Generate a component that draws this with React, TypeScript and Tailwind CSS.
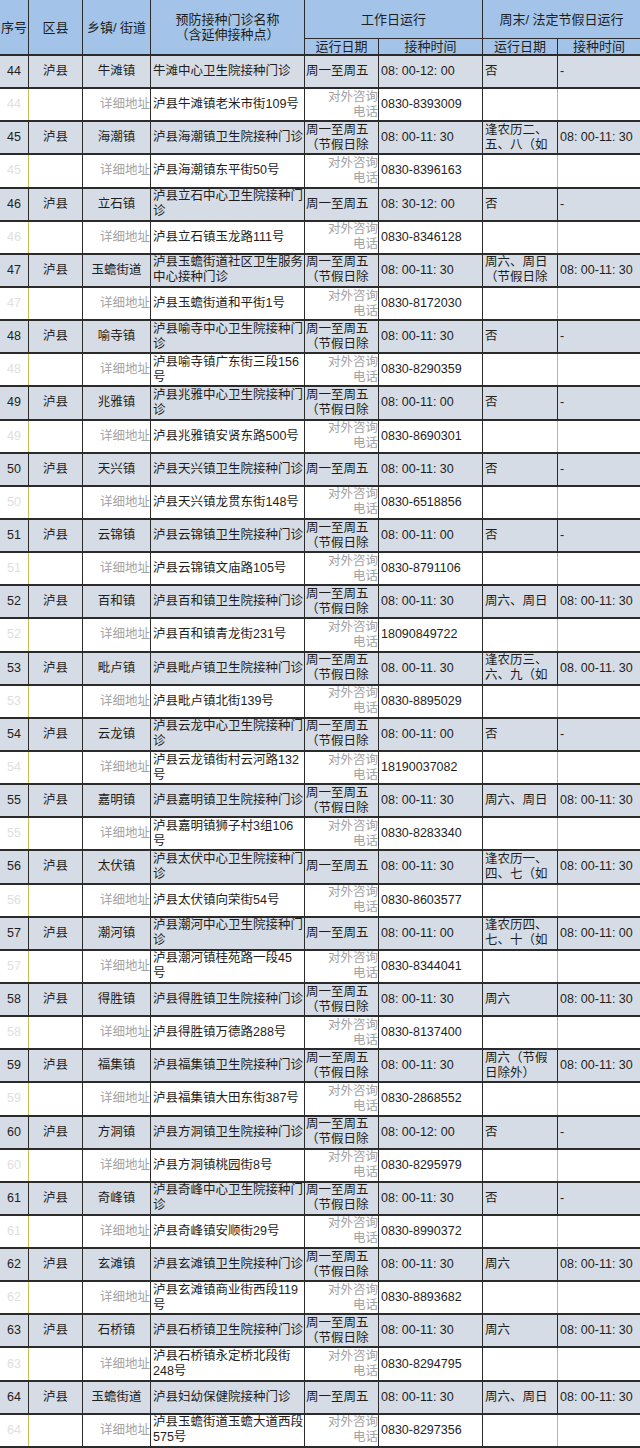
import React from 'react';

interface Entry {
  n: number;
  town: string;
  name: string[];
  days: string[];
  time: string;
  wdays: string[];
  wtime: string;
  addr: string[];
  phone: string;
}

const HOL = ['周一至周五', '（节假日除'];
const WK = ['周一至周五'];

const rows: Entry[] = [
  { n: 44, town: '牛滩镇', name: ['牛滩中心卫生院接种门诊'], days: WK, time: '08: 00-12: 00', wdays: ['否'], wtime: '-', addr: ['泸县牛滩镇老米市街109号'], phone: '0830-8393009' },
  { n: 45, town: '海潮镇', name: ['泸县海潮镇卫生院接种门诊'], days: HOL, time: '08: 00-11: 30', wdays: ['逢农历二、', '五、八（如'], wtime: '08: 00-11: 30', addr: ['泸县海潮镇东平街50号'], phone: '0830-8396163' },
  { n: 46, town: '立石镇', name: ['泸县立石中心卫生院接种门', '诊'], days: WK, time: '08: 30-12: 00', wdays: ['否'], wtime: '-', addr: ['泸县立石镇玉龙路111号'], phone: '0830-8346128' },
  { n: 47, town: '玉蟾街道', name: ['泸县玉蟾街道社区卫生服务', '中心接种门诊'], days: HOL, time: '08: 00-11: 30', wdays: ['周六、周日', '（节假日除'], wtime: '08: 00-11: 30', addr: ['泸县玉蟾街道和平街1号'], phone: '0830-8172030' },
  { n: 48, town: '喻寺镇', name: ['泸县喻寺中心卫生院接种门', '诊'], days: HOL, time: '08: 00-11: 30', wdays: ['否'], wtime: '-', addr: ['泸县喻寺镇广东街三段156', '号'], phone: '0830-8290359' },
  { n: 49, town: '兆雅镇', name: ['泸县兆雅中心卫生院接种门', '诊'], days: HOL, time: '08: 00-11: 00', wdays: ['否'], wtime: '-', addr: ['泸县兆雅镇安贤东路500号'], phone: '0830-8690301' },
  { n: 50, town: '天兴镇', name: ['泸县天兴镇卫生院接种门诊'], days: WK, time: '08: 00-11: 30', wdays: ['否'], wtime: '-', addr: ['泸县天兴镇龙贯东街148号'], phone: '0830-6518856' },
  { n: 51, town: '云锦镇', name: ['泸县云锦镇卫生院接种门诊'], days: HOL, time: '08: 00-11: 00', wdays: ['否'], wtime: '-', addr: ['泸县云锦镇文庙路105号'], phone: '0830-8791106' },
  { n: 52, town: '百和镇', name: ['泸县百和镇卫生院接种门诊'], days: HOL, time: '08: 00-11: 30', wdays: ['周六、周日'], wtime: '08: 00-11: 30', addr: ['泸县百和镇青龙街231号'], phone: '18090849722' },
  { n: 53, town: '毗卢镇', name: ['泸县毗卢镇卫生院接种门诊'], days: HOL, time: '08. 00-11. 30', wdays: ['逢农历三、', '六、九（如'], wtime: '08. 00-11. 30', addr: ['泸县毗卢镇北街139号'], phone: '0830-8895029' },
  { n: 54, town: '云龙镇', name: ['泸县云龙中心卫生院接种门', '诊'], days: HOL, time: '08: 00-11: 00', wdays: ['否'], wtime: '-', addr: ['泸县云龙镇街村云河路132', '号'], phone: '18190037082' },
  { n: 55, town: '嘉明镇', name: ['泸县嘉明镇卫生院接种门诊'], days: HOL, time: '08: 00-11: 30', wdays: ['周六、周日'], wtime: '08: 00-11: 30', addr: ['泸县嘉明镇狮子村3组106', '号'], phone: '0830-8283340' },
  { n: 56, town: '太伏镇', name: ['泸县太伏中心卫生院接种门', '诊'], days: WK, time: '08: 00-11: 30', wdays: ['逢农历一、', '四、七（如'], wtime: '08: 00-11: 30', addr: ['泸县太伏镇向荣街54号'], phone: '0830-8603577' },
  { n: 57, town: '潮河镇', name: ['泸县潮河中心卫生院接种门', '诊'], days: WK, time: '08: 00-11: 00', wdays: ['逢农历四、', '七、十（如'], wtime: '08: 00-11: 00', addr: ['泸县潮河镇桂苑路一段45', '号'], phone: '0830-8344041' },
  { n: 58, town: '得胜镇', name: ['泸县得胜镇卫生院接种门诊'], days: HOL, time: '08: 00-11: 30', wdays: ['周六'], wtime: '08: 00-11: 30', addr: ['泸县得胜镇万德路288号'], phone: '0830-8137400' },
  { n: 59, town: '福集镇', name: ['泸县福集镇卫生院接种门诊'], days: HOL, time: '08: 00-11: 30', wdays: ['周六（节假', '日除外）'], wtime: '08: 00-11: 30', addr: ['泸县福集镇大田东街387号'], phone: '0830-2868552' },
  { n: 60, town: '方洞镇', name: ['泸县方洞镇卫生院接种门诊'], days: HOL, time: '08: 00-12: 00', wdays: ['否'], wtime: '-', addr: ['泸县方洞镇桃园街8号'], phone: '0830-8295979' },
  { n: 61, town: '奇峰镇', name: ['泸县奇峰中心卫生院接种门', '诊'], days: HOL, time: '08: 00-11: 30', wdays: ['否'], wtime: '-', addr: ['泸县奇峰镇安顺街29号'], phone: '0830-8990372' },
  { n: 62, town: '玄滩镇', name: ['泸县玄滩镇卫生院接种门诊'], days: HOL, time: '08: 00-11: 30', wdays: ['周六'], wtime: '08: 00-11: 30', addr: ['泸县玄滩镇商业街西段119', '号'], phone: '0830-8893682' },
  { n: 63, town: '石桥镇', name: ['泸县石桥镇卫生院接种门诊'], days: HOL, time: '08: 00-11: 30', wdays: ['周六'], wtime: '08: 00-11: 30', addr: ['泸县石桥镇永定桥北段街', '248号'], phone: '0830-8294795' },
  { n: 64, town: '玉蟾街道', name: ['泸县妇幼保健院接种门诊'], days: WK, time: '08: 00-11: 30', wdays: ['周六、周日'], wtime: '08: 00-11: 30', addr: ['泸县玉蟾街道玉蟾大道西段', '575号'], phone: '0830-8297356' },
];

const Lines = ({ lines }: { lines: string[] }) => (
  <div className="flex flex-col">
    {lines.map((l, i) => (
      <div key={i} className="whitespace-nowrap">
        {l}
      </div>
    ))}
  </div>
);

const line = 'border-[#2b2b2b]';

function MainRow({ r }: { r: Entry }) {
  return (
    <div className={`flex h-[33.143px] shrink-0 border-b-2 ${line} bg-[#d6dce5] text-[#1e1e1e]`}>
      <div className={`w-[29px] shrink-0 flex items-center justify-center border-r ${line}`}>{r.n}</div>
      <div className={`w-[54px] shrink-0 flex items-center justify-center border-r ${line}`}>泸县</div>
      <div className={`w-[68px] shrink-0 flex items-center justify-center border-r ${line}`}>{r.town}</div>
      <div className={`w-[154px] shrink-0 flex items-center pl-[2px] overflow-hidden border-r ${line}`}>
        <Lines lines={r.name} />
      </div>
      <div className={`w-[74px] shrink-0 flex items-center pl-[1px] overflow-hidden border-r ${line}`}>
        <Lines lines={r.days} />
      </div>
      <div className={`w-[104px] shrink-0 flex items-center pl-[2px] overflow-hidden border-r ${line}`}>{r.time}</div>
      <div className={`w-[75px] shrink-0 flex items-center pl-[2px] overflow-hidden border-r ${line}`}>
        <Lines lines={r.wdays} />
      </div>
      <div className="w-[82px] shrink-0 flex items-center pl-[2px] overflow-hidden">{r.wtime}</div>
    </div>
  );
}

function DetailRow({ r }: { r: Entry }) {
  return (
    <div className={`flex h-[33.143px] shrink-0 border-b-2 ${line} bg-white text-[#1e1e1e]`}>
      <div className="w-[29px] shrink-0 flex items-center justify-center border-r border-[#c9bd5a] text-[#e0e0e0]">{r.n}</div>
      <div className={`w-[54px] shrink-0 border-r ${line}`} />
      <div className={`w-[68px] shrink-0 flex items-center justify-end border-r ${line} text-[#a3a3a3]`}>详细地址</div>
      <div className={`w-[154px] shrink-0 flex items-center pl-[2px] overflow-hidden border-r ${line}`}>
        <Lines lines={r.addr} />
      </div>
      <div className={`w-[74px] shrink-0 flex items-center justify-end overflow-hidden border-r ${line} text-[#a3a3a3] leading-[15px]`}>
        <div className="flex flex-col items-end">
          <div className="whitespace-nowrap">对外咨询</div>
          <div className="whitespace-nowrap">电话</div>
        </div>
      </div>
      <div className={`w-[104px] shrink-0 flex items-center pl-[2px] border-r ${line}`}>{r.phone}</div>
      <div className="w-[75px] shrink-0 border-r border-[#c9bd5a]" />
      <div className="w-[82px] shrink-0" />
    </div>
  );
}

export default function App() {
  return (
    <div
      className="w-[640px] h-[1448px] overflow-hidden flex flex-col bg-white text-[12.5px] leading-[15px]"
      style={{ fontFamily: '"Liberation Sans", "Noto Sans CJK SC", sans-serif' }}
    >
      <div className={`flex h-[56px] shrink-0 border-b-2 ${line} bg-[#a3c4e8] text-[#1e1e1e] text-[13px]`}>
        <div className={`w-[29px] shrink-0 flex items-center justify-center overflow-hidden border-r ${line}`}>
          <span className="whitespace-nowrap">序号</span>
        </div>
        <div className={`w-[54px] shrink-0 flex items-center justify-center border-r ${line}`}>区县</div>
        <div className={`w-[68px] shrink-0 flex items-center justify-center border-r ${line} whitespace-nowrap`}>乡镇/ 街道</div>
        <div className={`w-[154px] shrink-0 flex flex-col items-center justify-center border-r ${line}`}>
          <div>预防接种门诊名称</div>
          <div>（含延伸接种点）</div>
        </div>
        <div className="w-[335px] shrink-0 flex flex-col">
          <div className={`flex h-[40px] border-b ${line}`}>
            <div className={`w-[178px] shrink-0 flex items-center justify-center border-r ${line}`}>工作日运行</div>
            <div className="w-[157px] shrink-0 flex items-center justify-center">周末/ 法定节假日运行</div>
          </div>
          <div className="flex flex-1">
            <div className={`w-[74px] shrink-0 flex items-center justify-center border-r ${line}`}>运行日期</div>
            <div className={`w-[104px] shrink-0 flex items-center justify-center border-r ${line}`}>接种时间</div>
            <div className={`w-[75px] shrink-0 flex items-center justify-center border-r ${line}`}>运行日期</div>
            <div className="w-[82px] shrink-0 flex items-center justify-center">接种时间</div>
          </div>
        </div>
      </div>
      {rows.map((r) => (
        <React.Fragment key={r.n}>
          <MainRow r={r} />
          <DetailRow r={r} />
        </React.Fragment>
      ))}
    </div>
  );
}
